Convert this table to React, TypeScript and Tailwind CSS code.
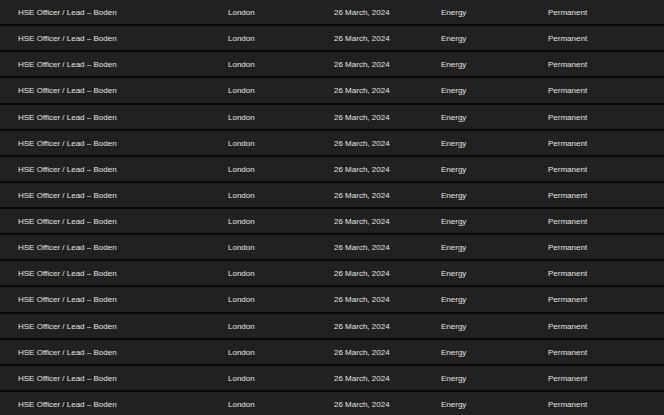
const jobs = Array.from({ length: 16 }, (_, i) => ({
  id: i,
  title: 'HSE Officer / Lead – Boden',
  location: 'London',
  date: '26 March, 2024',
  sector: 'Energy',
  type: 'Permanent',
}))

export default function App() {
  return (
    <div className="min-h-screen bg-[#0a0a0a] font-['Liberation_Sans',Arial,sans-serif] text-[8px] text-[#e4e4e4]">
      {jobs.map((job) => (
        <div
          key={job.id}
          className="grid h-[26.13px] grid-cols-[210px_106px_107px_107px_1fr] items-center border-b-2 border-[#0a0a0a] bg-[#212121] pl-[18px] pt-[2px]"
        >
          <div>{job.title}</div>
          <div>{job.location}</div>
          <div>{job.date}</div>
          <div>{job.sector}</div>
          <div>{job.type}</div>
        </div>
      ))}
    </div>
  )
}
